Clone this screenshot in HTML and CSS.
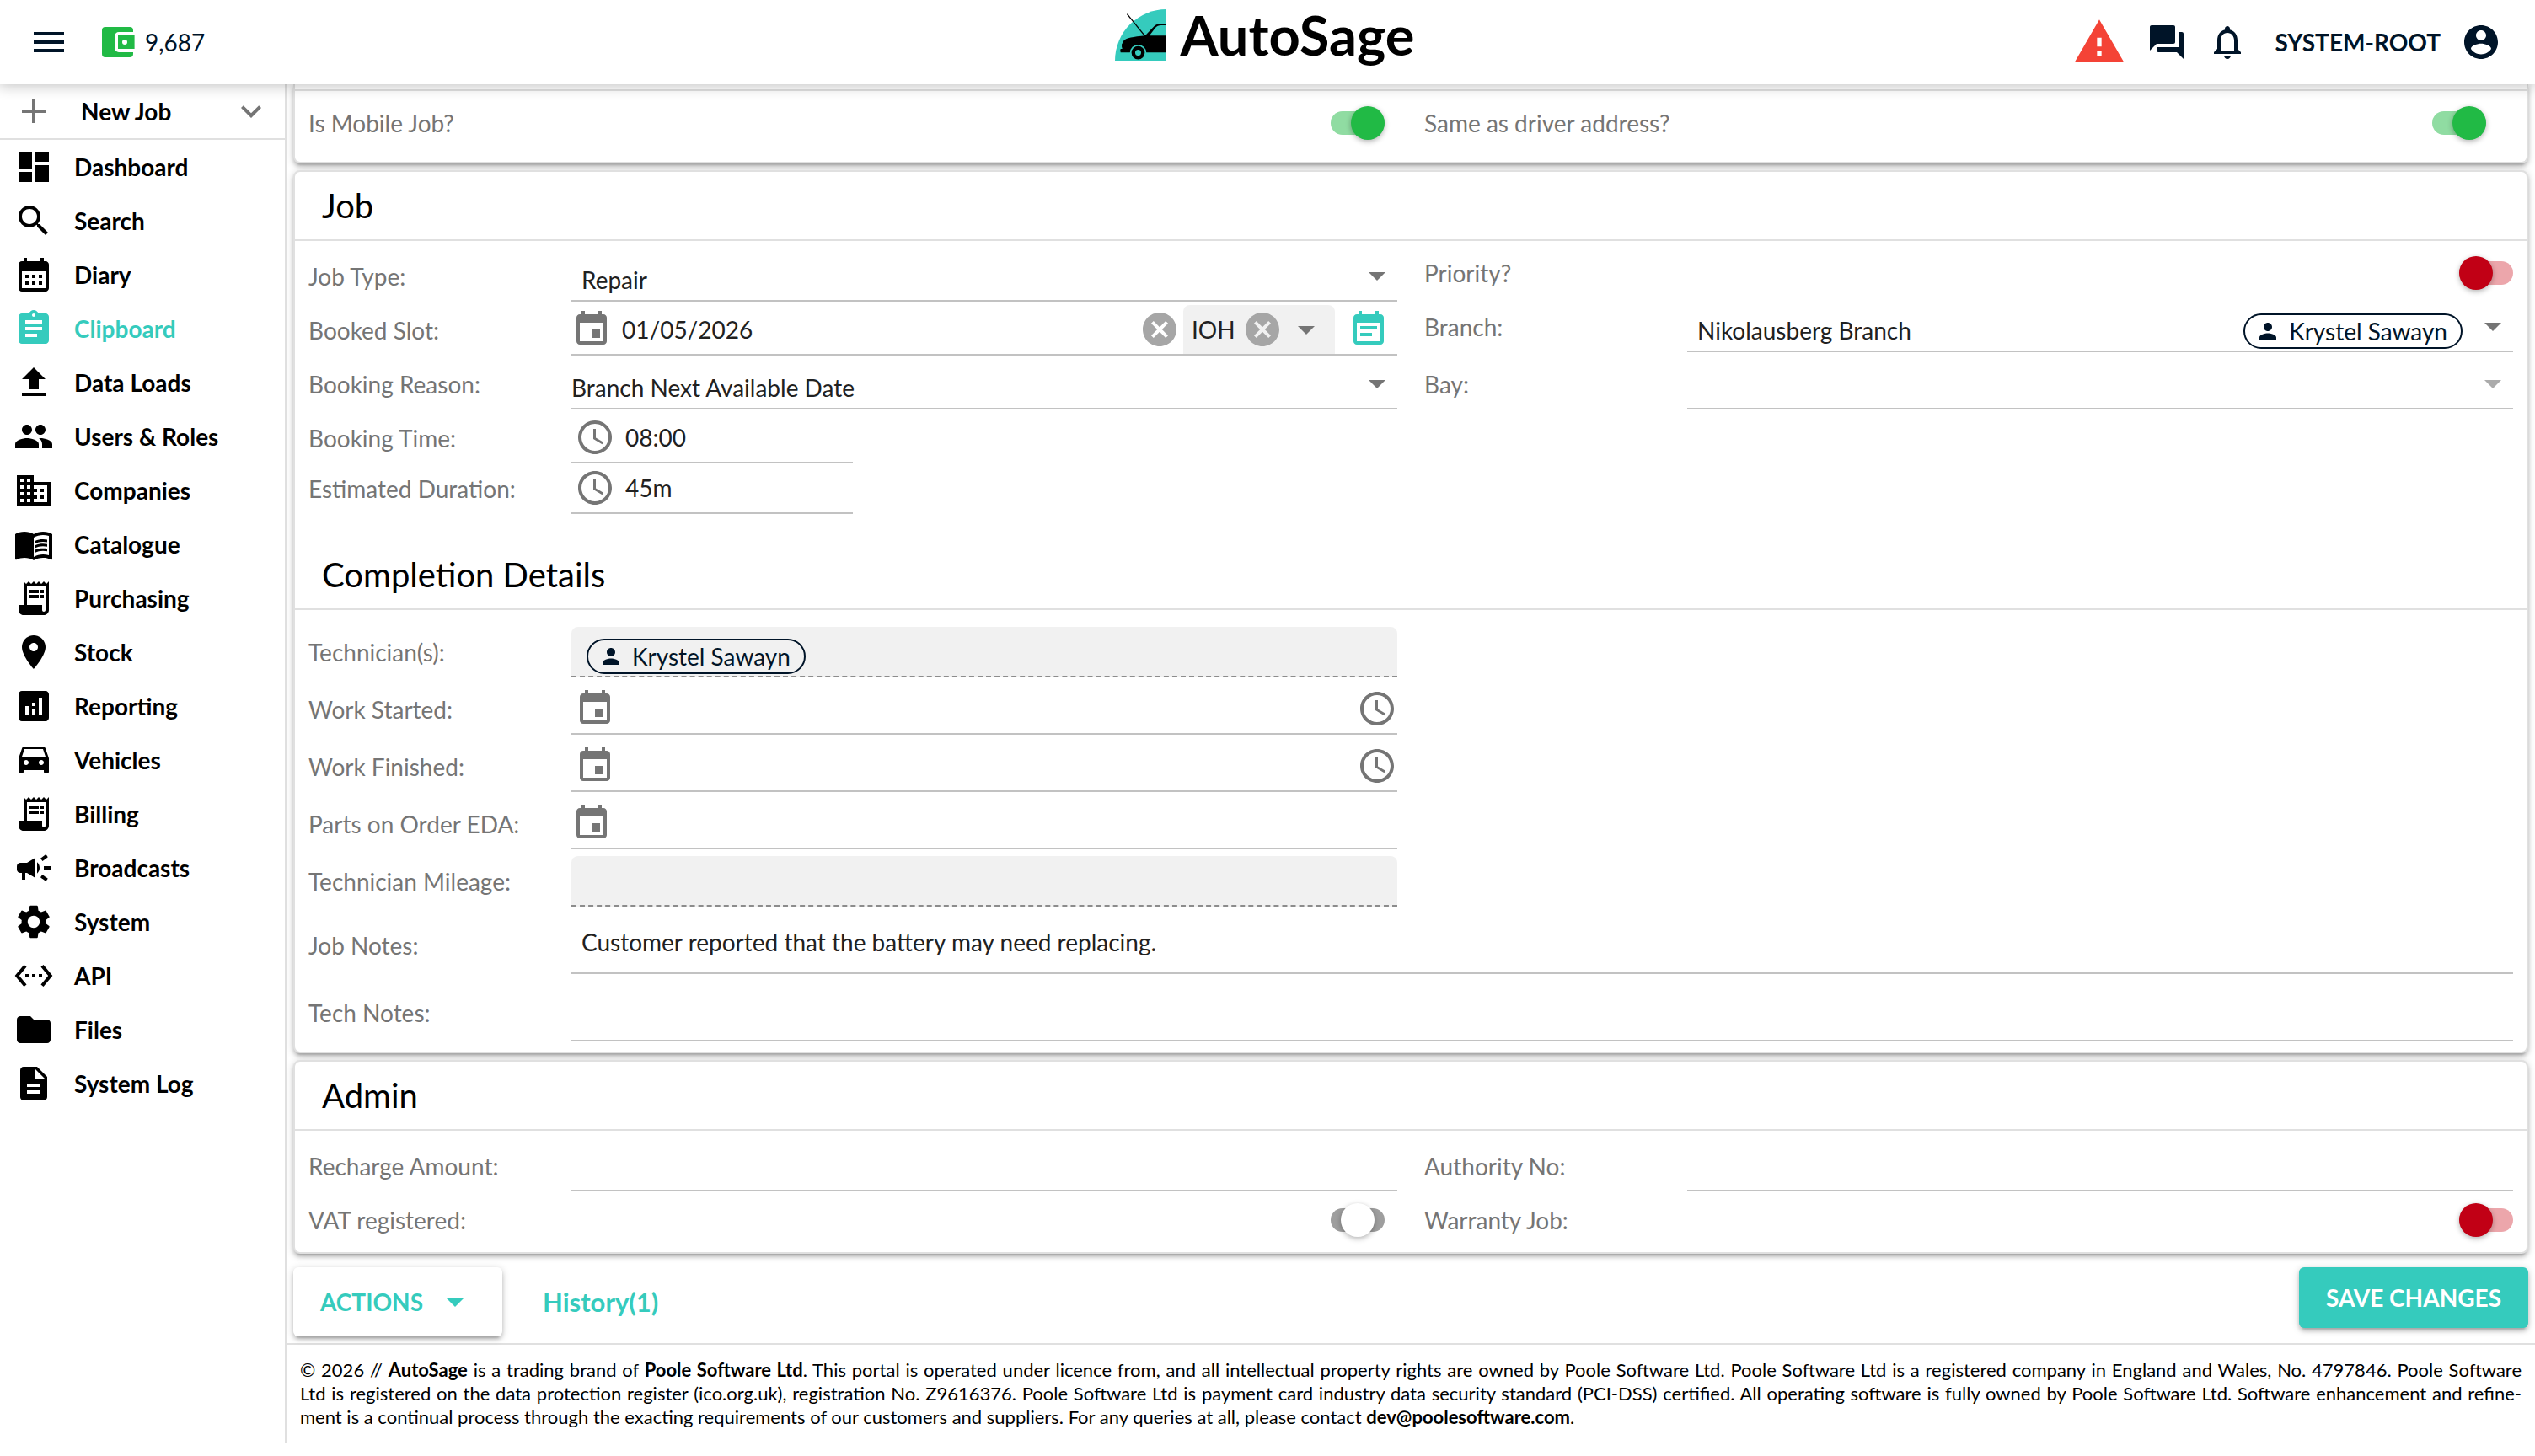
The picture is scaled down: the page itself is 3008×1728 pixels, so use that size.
FILE: index.html
```html
<!DOCTYPE html>
<html lang="en">
<head>
    <meta charset="UTF-8">
    <title>AutoSage</title>
    <link rel="stylesheet" href="styles.css">
</head>
<body>
<svg class="sprite" aria-hidden="true">
    <symbol id="menu" viewBox="0 0 24 24"><path d="M3 18h18v-2H3v2zm0-5h18v-2H3v2zm0-7v2h18V6H3z"/></symbol>
    <symbol id="wallet" viewBox="0 0 24 24"><path d="M4.500 3h14.500a2 2 0 0 1 2 2v1h-8.500a2.500 2.500 0 0 0-2.500 2.500v7a2.500 2.500 0 0 0 2.500 2.500H21v1a2 2 0 0 1-2 2H4.500a2 2 0 0 1-2-2V5a2 2 0 0 1 2-2zM12 8h9.800v8H12V8zm4 2.500a1.500 1.500 0 1 0 0 3 1.500 1.500 0 0 0 0-3z" fill-rule="evenodd"/></symbol>
    <symbol id="warning" viewBox="0 0 24 24"><path d="M1 21h22L12 2 1 21zm12-3h-2v-2h2v2zm0-4h-2v-4h2v4z"/></symbol>
    <symbol id="chat" viewBox="0 0 24 24"><path d="M21 6h-2v9H6v2c0 .55.45 1 1 1h11l4 4V7c0-.55-.45-1-1-1zm-4 6V3c0-.55-.45-1-1-1H3c-.55 0-1 .45-1 1v14l4-4h10c.55 0 1-.45 1-1z"/></symbol>
    <symbol id="bell" viewBox="0 0 24 24"><path d="M12 22c1.100 0 2-.9 2-2h-4c0 1.100.9 2 2 2zm6-6v-5c0-3.070-1.630-5.640-4.500-6.320V4c0-.83-.67-1.500-1.500-1.500s-1.500.67-1.500 1.500v.68C7.640 5.360 6 7.920 6 11v5l-2 2v1h16v-1l-2-2zm-2 1H8v-6c0-2.480 1.510-4.500 4-4.500s4 2.020 4 4.500v6z"/></symbol>
    <symbol id="account" viewBox="0 0 24 24"><path d="M12 2C6.480 2 2 6.480 2 12s4.480 10 10 10 10-4.480 10-10S17.520 2 12 2zm0 3c1.660 0 3 1.340 3 3s-1.340 3-3 3-3-1.340-3-3 1.340-3 3-3zm0 14.200c-2.500 0-4.710-1.280-6-3.220.03-1.990 4-3.080 6-3.080 1.990 0 5.970 1.090 6 3.080-1.290 1.940-3.500 3.220-6 3.220z"/></symbol>
    <symbol id="add" viewBox="0 0 24 24"><path d="M19 13h-6v6h-2v-6H5v-2h6V5h2v6h6v2z"/></symbol>
    <symbol id="expand" viewBox="0 0 24 24"><path d="M16.590 8.590L12 13.170 7.410 8.590 6 10l6 6 6-6z"/></symbol>
    <symbol id="dropdown" viewBox="0 0 24 24"><path d="M7 10l5 5 5-5z"/></symbol>
    <symbol id="dashboard" viewBox="0 0 24 24"><path d="M3 13h8V3H3v10zm0 8h8v-6H3v6zm10 0h8V11h-8v10zm0-18v6h8V3h-8z"/></symbol>
    <symbol id="search" viewBox="0 0 24 24"><path d="M15.500 14h-.79l-.28-.27C15.410 12.590 16 11.110 16 9.500 16 5.910 13.090 3 9.500 3S3 5.910 3 9.500 5.910 16 9.500 16c1.610 0 3.090-.59 4.230-1.570l.27.28v.79l5 4.990L20.490 19l-4.990-5zm-6 0C7.010 14 5 11.990 5 9.500S7.010 5 9.500 5 14 7.010 14 9.500 11.990 14 9.500 14z"/></symbol>
    <symbol id="diary" viewBox="0 0 24 24"><path d="M19 4h-1V2h-2v2H8V2H6v2H5c-1.110 0-2 .9-2 2v14c0 1.100.89 2 2 2h14c1.100 0 2-.9 2-2V6c0-1.100-.9-2-2-2zm0 16H5V10h14v10zM9 14H7v-2h2v2zm4 0h-2v-2h2v2zm4 0h-2v-2h2v2zm-8 4H7v-2h2v2zm4 0h-2v-2h2v2zm4 0h-2v-2h2v2z"/></symbol>
    <symbol id="clipboard" viewBox="0 0 24 24"><path d="M19 3h-4.180C14.400 1.840 13.300 1 12 1c-1.300 0-2.400.84-2.820 2H5c-1.100 0-2 .9-2 2v14c0 1.100.9 2 2 2h14c1.100 0 2-.9 2-2V5c0-1.100-.9-2-2-2zm-7 0c.55 0 1 .45 1 1s-.45 1-1 1-1-.45-1-1 .45-1 1-1zm2 14H7v-2h7v2zm3-4H7v-2h10v2zm0-4H7V7h10v2z"/></symbol>
    <symbol id="upload" viewBox="0 0 24 24"><path d="M9 16h6v-6h4l-7-7-7 7h4v6zm-4 2h14v2H5v-2z"/></symbol>
    <symbol id="people" viewBox="0 0 24 24"><path d="M16 11c1.660 0 2.990-1.340 2.990-3S17.660 5 16 5c-1.660 0-3 1.340-3 3s1.340 3 3 3zm-8 0c1.660 0 2.990-1.340 2.990-3S9.660 5 8 5C6.340 5 5 6.340 5 8s1.340 3 3 3zm0 2c-2.330 0-7 1.170-7 3.500V19h14v-2.500c0-2.330-4.670-3.500-7-3.500zm8 0c-.29 0-.62.02-.97.05 1.160.84 1.970 1.970 1.970 3.450V19h6v-2.500c0-2.330-4.670-3.500-7-3.500z"/></symbol>
    <symbol id="business" viewBox="0 0 24 24"><path d="M12 7V3H2v18h20V7H12zM6 19H4v-2h2v2zm0-4H4v-2h2v2zm0-4H4V9h2v2zm0-4H4V5h2v2zm4 12H8v-2h2v2zm0-4H8v-2h2v2zm0-4H8V9h2v2zm0-4H8V5h2v2zm10 12h-8v-2h2v-2h-2v-2h2v-2h-2V9h8v10zm-2-8h-2v2h2v-2zm0 4h-2v2h2v-2z"/></symbol>
    <symbol id="book" viewBox="0 0 24 24"><path d="M21 5c-1.110-.35-2.330-.5-3.500-.5-1.950 0-4.050.4-5.500 1.500-1.450-1.100-3.550-1.500-5.500-1.500S2.450 4.900 1 6v14.650c0 .25.25.5.5.5.1 0 .15-.05.25-.05C3.100 20.450 5.050 20 6.500 20c1.950 0 4.050.4 5.500 1.500 1.350-.85 3.800-1.500 5.500-1.500 1.650 0 3.350.3 4.750 1.050.1.05.15.05.25.05.25 0 .5-.25.5-.5V6c-.6-.45-1.250-.75-2-1zm0 13.500c-1.100-.35-2.300-.5-3.500-.5-1.700 0-4.150.65-5.500 1.500V8c1.350-.85 3.800-1.500 5.500-1.500 1.200 0 2.400.15 3.500.5v11.500z"/><path d="M17.500 10.500c.88 0 1.730.09 2.500.26V9.240c-.79-.15-1.640-.24-2.500-.24-1.700 0-3.240.29-4.500.83v1.660c1.130-.64 2.700-.99 4.500-.99zM13 12.490v1.660c1.130-.64 2.700-.99 4.500-.99.88 0 1.730.09 2.500.26V11.900c-.79-.15-1.640-.24-2.500-.24-1.700 0-3.240.3-4.500.83zM17.500 14.330c-1.700 0-3.240.29-4.500.83v1.660c1.130-.64 2.700-.99 4.500-.99.88 0 1.730.09 2.500.26v-1.520c-.79-.16-1.640-.24-2.500-.24z"/></symbol>
    <symbol id="receipt" viewBox="0 0 24 24"><path d="M19.500 3.500L18 2l-1.500 1.500L15 2l-1.500 1.500L12 2l-1.500 1.500L9 2 7.500 3.500 6 2v14H3v3c0 1.660 1.340 3 3 3h12c1.660 0 3-1.340 3-3V2l-1.500 1.500zM19 19c0 .55-.45 1-1 1s-1-.45-1-1v-3H8V5h11v14z"/><path d="M9 7h6v2H9zM16 7h2v2h-2zM9 10h6v2H9zM16 10h2v2h-2z"/></symbol>
    <symbol id="place" viewBox="0 0 24 24"><path d="M12 2C8.130 2 5 5.130 5 9c0 5.250 7 13 7 13s7-7.750 7-13c0-3.870-3.130-7-7-7zm0 9.500c-1.380 0-2.500-1.120-2.500-2.500s1.120-2.500 2.500-2.500 2.500 1.120 2.500 2.500-1.120 2.500-2.500 2.500z"/></symbol>
    <symbol id="analytics" viewBox="0 0 24 24"><path d="M19 3H5c-1.100 0-2 .9-2 2v14c0 1.100.9 2 2 2h14c1.100 0 2-.9 2-2V5c0-1.100-.9-2-2-2zM9 17H7v-5h2v5zm4 0h-2v-3h2v3zm0-5h-2v-2h2v2zm4 5h-2V7h2v10z"/></symbol>
    <symbol id="car" viewBox="0 0 24 24"><path d="M18.920 5.010C18.720 4.420 18.160 4 17.500 4h-11c-.66 0-1.210.42-1.420 1.010L3 11v8c0 .55.45 1 1 1h1c.55 0 1-.45 1-1v-1h12v1c0 .55.45 1 1 1h1c.55 0 1-.45 1-1v-8l-2.080-5.990zM7.500 15c-.83 0-1.500-.67-1.500-1.500S6.670 12 7.500 12s1.500.67 1.500 1.500S8.330 15 7.500 15zm9 0c-.83 0-1.500-.67-1.500-1.500s.67-1.500 1.500-1.500 1.500.67 1.500 1.500-.67 1.500-1.500 1.500zM5 10l1.500-4.500h11L19 10H5z"/></symbol>
    <symbol id="campaign" viewBox="0 0 24 24"><path d="M18 11v2h4v-2h-4zm-2 6.610c.96.71 2.210 1.650 3.200 2.390.4-.53.8-1.070 1.200-1.600-.99-.74-2.240-1.680-3.200-2.400-.4.54-.8 1.080-1.200 1.610zM20.400 5.600c-.4-.53-.8-1.070-1.200-1.600-.99.74-2.240 1.680-3.200 2.400.4.53.8 1.070 1.200 1.600.96-.72 2.210-1.650 3.200-2.400zM4 9c-1.100 0-2 .9-2 2v2c0 1.100.9 2 2 2h1v4h2v-4h1l5 3V6L8 9H4zm11.500 3c0-1.330-.58-2.530-1.500-3.350v6.690c.92-.81 1.500-2.010 1.500-3.340z"/></symbol>
    <symbol id="settings" viewBox="0 0 24 24"><path d="M19.140 12.940c.04-.3.06-.61.06-.94 0-.32-.02-.64-.07-.94l2.030-1.580c.18-.14.23-.41.12-.61l-1.920-3.320c-.12-.22-.37-.29-.59-.22l-2.390.96c-.5-.38-1.030-.7-1.620-.94l-.36-2.540c-.04-.24-.24-.41-.48-.41h-3.840c-.24 0-.43.17-.47.41l-.36 2.540c-.59.24-1.130.57-1.620.94l-2.390-.96c-.22-.08-.47 0-.59.22L2.740 8.870c-.12.21-.08.47.12.61l2.030 1.580c-.05.3-.09.63-.09.94s.02.64.07.94l-2.030 1.580c-.18.14-.23.41-.12.61l1.920 3.320c.12.22.37.29.59.22l2.390-.96c.5.38 1.030.7 1.620.94l.36 2.540c.05.24.24.41.48.41h3.840c.24 0 .44-.17.47-.41l.36-2.540c.59-.24 1.130-.56 1.620-.94l2.390.96c.22.08.47 0 .59-.22l1.920-3.320c.12-.22.07-.47-.12-.61l-2.010-1.580zM12 15.600c-1.980 0-3.600-1.620-3.600-3.600s1.620-3.600 3.600-3.600 3.600 1.620 3.600 3.600-1.620 3.600-3.600 3.600z"/></symbol>
    <symbol id="api" viewBox="0 0 24 24"><path d="M7.770 6.760L6.230 5.480.82 12l5.410 6.520 1.540-1.280L3.420 12l4.350-5.240zM7 13h2v-2H7v2zm10-2h-2v2h2v-2zm-6 2h2v-2h-2v2zm6.770-7.520l-1.540 1.280L20.580 12l-4.350 5.240 1.540 1.280L23.180 12l-5.410-6.520z"/></symbol>
    <symbol id="folder" viewBox="0 0 24 24"><path d="M10 4H4c-1.100 0-2 .9-2 2v12c0 1.100.9 2 2 2h16c1.100 0 2-.9 2-2V8c0-1.100-.9-2-2-2h-8l-2-2z"/></symbol>
    <symbol id="document" viewBox="0 0 24 24"><path d="M14 2H6c-1.100 0-2 .9-2 2v16c0 1.100.89 2 2 2h12c1.100 0 2-.9 2-2V8l-6-6zm2 16H8v-2h8v2zm0-4H8v-2h8v2zm-3-5V3.500L18.500 9H13z"/></symbol>
    <symbol id="event" viewBox="0 0 24 24"><path d="M17 12h-5v5h5v-5zM16 1v2H8V1H6v2H5c-1.110 0-2 .9-2 2v14c0 1.100.89 2 2 2h14c1.100 0 2-.9 2-2V5c0-1.100-.9-2-2-2h-1V1h-2zm3 18H5V8h14v11z"/></symbol>
    <symbol id="event-note" viewBox="0 0 24 24"><path d="M17 10H7v2h10v-2zm2-7h-1V1h-2v2H8V1H6v2H5c-1.110 0-2 .9-2 2v14c0 1.100.89 2 2 2h14c1.100 0 2-.9 2-2V5c0-1.100-.9-2-2-2zm0 16H5V8h14v11zm-5-5H7v2h7v-2z"/></symbol>
    <symbol id="clock" viewBox="0 0 24 24"><path d="M12 2C6.470 2 2 6.480 2 12s4.470 10 10 10 10-4.480 10-10S17.520 2 12 2zm0 18c-4.420 0-8-3.580-8-8s3.580-8 8-8 8 3.580 8 8-3.580 8-8 8zm.5-13H11v6l5.250 3.150.75-1.230-4.500-2.670z"/></symbol>
    <symbol id="cancel" viewBox="0 0 24 24"><path d="M12 2C6.470 2 2 6.470 2 12s4.470 10 10 10 10-4.470 10-10S17.530 2 12 2zm5 13.590L15.590 17 12 13.410 8.410 17 7 15.590 10.590 12 7 8.410 8.410 7 12 10.590 15.590 7 17 8.410 13.410 12 17 15.590z"/></symbol>
    <symbol id="person" viewBox="0 0 24 24"><path d="M12 12c2.210 0 4-1.790 4-4s-1.790-4-4-4-4 1.790-4 4 1.790 4 4 4zm0 2c-2.670 0-8 1.340-8 4v2h16v-2c0-2.660-5.330-4-8-4z"/></symbol>
</svg>

<header class="topbar">
    <div class="topbar-left">
        <button class="icon-btn" aria-label="Menu"><svg class="icon"><use href="#menu"/></svg></button>
        <span class="credits"><svg class="icon green"><use href="#wallet"/></svg>9,687</span>
    </div>
    <a class="logo" href="#">
        <svg class="logo-mark" viewBox="0 0 182 182">
            <path d="M0 182A182 182 0 0 1 182 0V182z" fill="#35cbbd"/>
            <path d="M43 17L107 96" stroke="#000" stroke-width="4"/>
            <path d="M24 133V124L28 118C30 106 44 101 78 96L107 93L137 62Q147 51 162 51H182V57H164Q150 57 143 66L122 93H182V153H20Q17 146 20 140H26z"/>
            <circle cx="82" cy="154" r="29" fill="#35cbbd"/>
            <circle cx="82" cy="154" r="17" fill="none" stroke="#000" stroke-width="13"/>
        </svg>
        <span>AutoSage</span>
    </a>
    <div class="topbar-right">
        <button class="icon-btn" aria-label="Warnings"><svg class="icon icon-warning"><use href="#warning"/></svg></button>
        <button class="icon-btn" aria-label="Messages"><svg class="icon"><use href="#chat"/></svg></button>
        <button class="icon-btn" aria-label="Notifications"><svg class="icon"><use href="#bell"/></svg></button>
        <button class="user-btn">SYSTEM-ROOT <svg class="icon"><use href="#account"/></svg></button>
    </div>
</header>

<div class="layout">
    <nav class="sidebar">
        <button class="new-job"><svg class="icon"><use href="#add"/></svg><span>New Job</span><svg class="icon"><use href="#expand"/></svg></button>
        <a href="#"><svg class="icon"><use href="#dashboard"/></svg>Dashboard</a>
        <a href="#"><svg class="icon"><use href="#search"/></svg>Search</a>
        <a href="#"><svg class="icon"><use href="#diary"/></svg>Diary</a>
        <a href="#" class="active"><svg class="icon"><use href="#clipboard"/></svg>Clipboard</a>
        <a href="#"><svg class="icon"><use href="#upload"/></svg>Data Loads</a>
        <a href="#"><svg class="icon"><use href="#people"/></svg>Users &amp; Roles</a>
        <a href="#"><svg class="icon"><use href="#business"/></svg>Companies</a>
        <a href="#"><svg class="icon"><use href="#book"/></svg>Catalogue</a>
        <a href="#"><svg class="icon"><use href="#receipt"/></svg>Purchasing</a>
        <a href="#"><svg class="icon"><use href="#place"/></svg>Stock</a>
        <a href="#"><svg class="icon"><use href="#analytics"/></svg>Reporting</a>
        <a href="#"><svg class="icon"><use href="#car"/></svg>Vehicles</a>
        <a href="#"><svg class="icon"><use href="#receipt"/></svg>Billing</a>
        <a href="#"><svg class="icon"><use href="#campaign"/></svg>Broadcasts</a>
        <a href="#"><svg class="icon"><use href="#settings"/></svg>System</a>
        <a href="#"><svg class="icon"><use href="#api"/></svg>API</a>
        <a href="#"><svg class="icon"><use href="#folder"/></svg>Files</a>
        <a href="#"><svg class="icon"><use href="#document"/></svg>System Log</a>
    </nav>

    <div class="page">
        <main class="content">
            <section class="card card-top">
                <div class="columns mobile-job">
                    <div class="row">
                        <label for="mobile">Is Mobile Job?</label>
                        <div class="field-toggle inset"><input type="checkbox" class="toggle" id="mobile" checked></div>
                    </div>
                    <div class="row">
                        <label for="sameAddress">Same as driver address?</label>
                        <div class="field-toggle inset-wide"><input type="checkbox" class="toggle" id="sameAddress" checked></div>
                    </div>
                </div>
            </section>

            <section class="card">
                <h2>Job</h2>
                <div class="columns job">
                    <div>
                        <div class="row spaced">
                            <label for="jobType">Job Type:</label>
                            <div class="field">
                                <select id="jobType" class="padded low"><option>Repair</option></select>
                                <svg class="icon"><use href="#dropdown"/></svg>
                            </div>
                        </div>
                        <div class="row">
                            <label for="slot">Booked Slot:</label>
                            <div class="field">
                                <svg class="icon"><use href="#event"/></svg>
                                <input type="text" id="slot" class="padded" value="01/05/2026">
                                <button class="clear" aria-label="Clear date"><svg class="icon"><use href="#cancel"/></svg></button>
                                <div class="slot-part">
                                    <select aria-label="Slot"><option>IOH</option></select>
                                    <button class="clear" aria-label="Clear slot"><svg class="icon"><use href="#cancel"/></svg></button>
                                    <svg class="icon"><use href="#dropdown"/></svg>
                                </div>
                                <button class="diary-btn" aria-label="Open diary"><svg class="icon"><use href="#event-note"/></svg></button>
                            </div>
                        </div>
                        <div class="row">
                            <label for="reason">Booking Reason:</label>
                            <div class="field">
                                <select id="reason" class="low"><option>Branch Next Available Date</option></select>
                                <svg class="icon"><use href="#dropdown"/></svg>
                            </div>
                        </div>
                        <div class="row">
                            <label for="time">Booking Time:</label>
                            <div class="field short lead">
                                <svg class="icon"><use href="#clock"/></svg>
                                <input type="text" id="time" class="padded" value="08:00">
                            </div>
                        </div>
                        <div class="row flush">
                            <label for="duration">Estimated Duration:</label>
                            <div class="field short lead">
                                <svg class="icon"><use href="#clock"/></svg>
                                <input type="text" id="duration" class="padded" value="45m">
                            </div>
                        </div>
                    </div>
                    <div>
                        <div class="row">
                            <label for="priority">Priority?</label>
                            <div class="field-toggle"><input type="checkbox" class="toggle off" id="priority"></div>
                        </div>
                        <div class="row">
                            <label for="branch">Branch:</label>
                            <div class="field">
                                <select id="branch" class="padded low"><option>Nikolausberg Branch</option></select>
                                <span class="chip"><svg><use href="#person"/></svg>Krystel Sawayn</span>
                                <svg class="icon"><use href="#dropdown"/></svg>
                            </div>
                        </div>
                        <div class="row spaced">
                            <label for="bay">Bay:</label>
                            <div class="field">
                                <select id="bay" disabled><option></option></select>
                                <svg class="icon faded"><use href="#dropdown"/></svg>
                            </div>
                        </div>
                    </div>
                </div>

                <h2>Completion Details</h2>
                <div class="columns completion">
                    <div>
                        <div class="row spaced">
                            <span class="label">Technician(s):</span>
                            <div class="field readonly">
                                <span class="chip"><svg><use href="#person"/></svg>Krystel Sawayn</span>
                            </div>
                        </div>
                        <div class="row spaced">
                            <label for="started">Work Started:</label>
                            <div class="field lead">
                                <svg class="icon"><use href="#event"/></svg>
                                <input type="text" id="started">
                                <svg class="icon"><use href="#clock"/></svg>
                            </div>
                        </div>
                        <div class="row spaced">
                            <label for="finished">Work Finished:</label>
                            <div class="field lead">
                                <svg class="icon"><use href="#event"/></svg>
                                <input type="text" id="finished">
                                <svg class="icon"><use href="#clock"/></svg>
                            </div>
                        </div>
                        <div class="row spaced">
                            <label for="parts">Parts on Order EDA:</label>
                            <div class="field">
                                <svg class="icon"><use href="#event"/></svg>
                                <input type="text" id="parts">
                            </div>
                        </div>
                        <div class="row spaced">
                            <label for="mileage">Technician Mileage:</label>
                            <div class="field readonly"><input type="text" id="mileage" readonly></div>
                        </div>
                    </div>
                </div>
                <div class="notes">
                    <div class="row">
                        <label for="jobNotes">Job Notes:</label>
                        <textarea id="jobNotes" rows="1">Customer reported that the battery may need replacing.</textarea>
                    </div>
                    <div class="row">
                        <label for="techNotes">Tech Notes:</label>
                        <textarea id="techNotes" rows="1"></textarea>
                    </div>
                </div>
            </section>

            <section class="card">
                <h2>Admin</h2>
                <div class="columns admin">
                    <div>
                        <div class="row spaced">
                            <label for="recharge">Recharge Amount:</label>
                            <div class="field"><input type="text" id="recharge"></div>
                        </div>
                        <div class="row">
                            <label for="vat">VAT registered:</label>
                            <div class="field-toggle inset"><input type="checkbox" class="toggle unset" id="vat"></div>
                        </div>
                    </div>
                    <div>
                        <div class="row spaced">
                            <label for="authority">Authority No:</label>
                            <div class="field"><input type="text" id="authority"></div>
                        </div>
                        <div class="row">
                            <label for="warranty">Warranty Job:</label>
                            <div class="field-toggle"><input type="checkbox" class="toggle off" id="warranty"></div>
                        </div>
                    </div>
                </div>
            </section>

            <div class="actions">
                <button class="btn btn-actions">ACTIONS <svg class="icon"><use href="#dropdown"/></svg></button>
                <a href="#" class="history">History(1)</a>
                <button class="btn btn-save">SAVE CHANGES</button>
            </div>
        </main>

        <footer class="footer">
            © 2026 // <b>AutoSage</b> is a trading brand of <b>Poole Software Ltd</b>. This portal is operated under licence from, and all intellectual property rights are owned by Poole Software Ltd. Poole Software Ltd is a registered company in England and Wales, No. 4797846. Poole Software<br>
            Ltd is registered on the data protection register (ico.org.uk), registration No. Z9616376. Poole Software Ltd is payment card industry data security standard (PCI-DSS) certified. All operating software is fully owned by Poole Software Ltd. Software enhancement and refine-<br>
            <span>ment is a continual process through the exacting requirements of our customers and suppliers. For any queries at all, please contact <b>dev@poolesoftware.com</b>.</span>
        </footer>
    </div>
</div>
</body>
</html>
```

FILE: styles.css
```css
* {
    box-sizing: border-box;
}

body {
    margin: 0;
    background: #fff;
    color: #000;
}

body, select, input, button, textarea {
    font-family: Lato, "Open Sans", sans-serif;
    font-size: 28px;
}

button {
    background: none;
    border: none;
    padding: 0;
    color: inherit;
}

a {
    color: inherit;
    text-decoration: none;
}

.sprite {
    display: none;
}

.icon {
    width: 48px;
    height: 48px;
    flex: none;
    display: block;
    fill: currentColor;
}

.green {
    color: #21ba45;
}

/* top bar */
.topbar {
    position: relative;
    z-index: 1;
    display: grid;
    grid-template-columns: 1fr auto 1fr;
    height: 100px;
    padding: 0 40px 0 34px;
    background: #fff;
    color: #001428;
    box-shadow: 0 0 16px 2px rgba(0, 0, 0, .24);
}

.topbar-left, .topbar-right, .credits, .user-btn {
    display: flex;
    align-items: center;
}

.topbar-left {
    gap: 34px;
}

.credits {
    gap: 8px;
}

.topbar-right {
    justify-content: flex-end;
    gap: 24px;
}

.user-btn {
    gap: 24px;
    margin-left: 8px;
    font-weight: bold;
}

.icon-warning {
    width: 64px;
    height: 64px;
    color: #f44336;
}

.logo {
    display: flex;
    align-items: center;
    gap: 16px;
    height: 82px;
    font-size: 65px;
    font-weight: bold;
    line-height: 80px;
    color: #000;
}

.logo-mark {
    width: 61px;
    height: 61px;
}

/* side menu */
.layout {
    display: flex;
}

.sidebar {
    width: 340px;
    flex: none;
    border-right: 2px solid #e0e0e0;
    font-weight: bold;
}

.sidebar a {
    display: flex;
    align-items: center;
    gap: 24px;
    height: 64px;
    padding: 0 16px;
}

.sidebar .active {
    color: #35cbbd;
}

.new-job {
    display: flex;
    align-items: center;
    width: 100%;
    height: 66px;
    padding: 0 16px;
    border-bottom: 2px solid #e0e0e0;
    font-weight: bold;
    text-align: left;
}

.new-job span {
    flex: 1;
    padding-left: 32px;
}

.new-job .icon {
    color: #757575;
}

/* cards */
.page {
    flex: 1;
    min-width: 0;
}

.content {
    padding: 0 8px 8px;
}

.card {
    margin-bottom: 8px;
    background: #fff;
    border: 2px solid #e0e0e0;
    border-radius: 8px;
    box-shadow: 0 2px 10px rgba(0, 0, 0, .2), 0 4px 4px rgba(0, 0, 0, .14), 0 6px 2px -4px rgba(0, 0, 0, .12);
}

.card-top {
    padding-top: 6px;
    border-top: none;
    border-radius: 0 0 8px 8px;
}

.card h2 {
    height: 82px;
    margin: 0;
    padding: 0 32px;
    border-bottom: 2px solid #e0e0e0;
    font-size: 40px;
    font-weight: normal;
    line-height: 80px;
}

.columns {
    display: grid;
    grid-template-columns: 1fr 1fr;
    gap: 32px;
    padding: 4px 16px 0;
}

.mobile-job {
    padding-bottom: 16px;
    border-top: 2px solid #e0e0e0;
}

.job {
    padding-bottom: 32px;
}

.completion {
    padding-top: 12px;
}

.admin {
    padding-bottom: 8px;
}

/* form rows */
.row {
    display: grid;
    grid-template-columns: 312px 1fr;
    align-items: center;
    height: 60px;
    margin-top: 4px;
}

.row.spaced {
    margin-top: 8px;
}

.row.flush {
    margin-top: 0;
}

.row label, .row .label {
    color: #757575;
}

.field {
    display: flex;
    align-items: center;
    height: 60px;
    min-width: 0;
    border-bottom: 2px solid #c2c2c2;
}

.field .icon {
    color: #757575;
}

.field input, .field select {
    flex: 1;
    min-width: 0;
    height: 58px;
    padding: 0;
    border: none;
    background: none;
    color: #212121;
    appearance: none;
}

.field .padded {
    padding-left: 12px;
}

.field .low {
    padding-top: 10px;
}

.field.short {
    width: 334px;
}

.field.lead {
    padding-left: 4px;
}

.field .faded {
    opacity: .6;
}

.field.readonly {
    padding-left: 18px;
    border-bottom: 2px dashed #8c8c8c;
    border-radius: 8px 8px 0 0;
    background: #f1f1f1;
}

.field .clear .icon {
    color: #a6a6a6;
}

.slot-part {
    display: flex;
    align-items: center;
    gap: 4px;
    width: 180px;
    height: 58px;
    margin-left: 4px;
    padding: 0 10px;
    border-radius: 8px 8px 0 0;
    background: #f1f1f1;
}

.diary-btn {
    margin: 0 10px 0 16px;
}

.field .diary-btn .icon {
    color: #35cbbd;
}

.chip {
    display: flex;
    align-items: center;
    gap: 10px;
    height: 42px;
    margin: 12px 12px 0 0;
    padding: 0 16px 0 12px;
    border: 2px solid #001428;
    border-radius: 21px;
    color: #001428;
}

.chip svg {
    width: 30px;
    height: 30px;
    fill: currentColor;
}

.notes {
    padding: 0 16px 12px;
}

.notes .row {
    height: 64px;
    margin-top: 16px;
}

.notes label {
    padding-bottom: 4px;
}

.notes textarea {
    height: 64px;
    padding: 8px 12px;
    border: none;
    border-bottom: 2px solid #c2c2c2;
    background: none;
    color: #212121;
    line-height: 36px;
    resize: none;
}

/* switches */
.field-toggle {
    display: flex;
    justify-content: flex-end;
}

.inset {
    padding-right: 15px;
}

.inset-wide {
    padding-right: 32px;
}

.toggle {
    display: flex;
    align-items: center;
    justify-content: flex-end;
    width: 64px;
    height: 28px;
    margin: 0;
    border-radius: 14px;
    background: #90dca2;
    appearance: none;
}

.toggle::before {
    content: "";
    flex: none;
    width: 40px;
    height: 40px;
    border-radius: 50%;
    background: #21ba45;
    box-shadow: 0 2px 6px rgba(0, 0, 0, .3);
}

.toggle.off {
    justify-content: flex-start;
    background: #eca6ab;
}

.toggle.off::before {
    background: #c10015;
}

.toggle.unset {
    justify-content: center;
    background: #9e9e9e;
}

.toggle.unset::before {
    background: #fff;
}

/* bottom buttons */
.actions {
    display: flex;
    align-items: flex-start;
    padding-top: 8px;
}

.btn {
    border-radius: 6px;
    font-weight: bold;
    box-shadow: 0 2px 10px rgba(0, 0, 0, .2), 0 4px 4px rgba(0, 0, 0, .14), 0 6px 2px -4px rgba(0, 0, 0, .12);
}

.btn-actions {
    display: flex;
    align-items: center;
    gap: 14px;
    height: 82px;
    padding: 0 32px;
    color: #35cbbd;
}

.history {
    margin-left: 48px;
    font-size: 31px;
    font-weight: bold;
    line-height: 82px;
    color: #35cbbd;
}

.btn-save {
    height: 72px;
    margin-left: auto;
    padding: 0 32px;
    background: #35cbbd;
    color: #fff;
}

.footer {
    padding: 16px;
    border-top: 2px solid #e0e0e0;
    font-size: 22px;
    line-height: 28px;
    text-align: justify;
    text-align-last: justify;
}

.footer span {
    display: block;
    text-align-last: left;
}
```
